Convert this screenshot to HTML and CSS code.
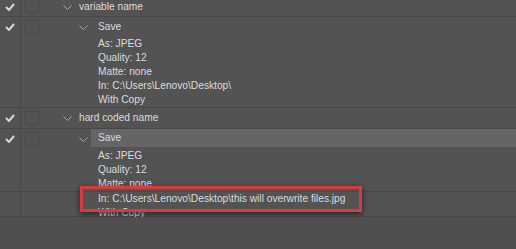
FILE: index.html
```html
<!DOCTYPE html>
<html lang="en">
<head>
    <meta charset="UTF-8">
    <title>Actions</title>
    <link rel="stylesheet" href="styles.css">
</head>
<body>
    <div class="panel">
        <div class="row first">
            <div class="check"><svg width="10" height="8" viewBox="0 0 10 8"><path d="M1 4 L4 7 L9 1" /></svg></div>
            <div class="toggle"><span class="box"></span></div>
            <div class="body">
                <div class="head lvl1"><svg class="chev" width="9" height="5" viewBox="0 0 9 5"><path d="M0.5 0.5 L4.5 4.5 L8.5 0.5" /></svg><span class="label">variable name</span></div>
            </div>
        </div>

        <div class="row">
            <div class="check"><svg width="10" height="8" viewBox="0 0 10 8"><path d="M1 4 L4 7 L9 1" /></svg></div>
            <div class="toggle"><span class="box"></span></div>
            <div class="body">
                <div class="head lvl2"><svg class="chev" width="9" height="5" viewBox="0 0 9 5"><path d="M0.5 0.5 L4.5 4.5 L8.5 0.5" /></svg><span class="label">Save</span></div>
                <div class="line">As: JPEG</div>
                <div class="line">Quality: 12</div>
                <div class="line">Matte: none</div>
                <div class="line">In: C:\Users\Lenovo\Desktop\</div>
                <div class="line">With Copy</div>
            </div>
        </div>

        <div class="row">
            <div class="check"><svg width="10" height="8" viewBox="0 0 10 8"><path d="M1 4 L4 7 L9 1" /></svg></div>
            <div class="toggle"><span class="box"></span></div>
            <div class="body">
                <div class="head lvl1"><svg class="chev" width="9" height="5" viewBox="0 0 9 5"><path d="M0.5 0.5 L4.5 4.5 L8.5 0.5" /></svg><span class="label">hard coded name</span></div>
            </div>
        </div>

        <div class="row">
            <div class="check"><svg width="10" height="8" viewBox="0 0 10 8"><path d="M1 4 L4 7 L9 1" /></svg></div>
            <div class="toggle"><span class="box"></span></div>
            <div class="body">
                <div class="head lvl2 selected"><svg class="chev" width="9" height="5" viewBox="0 0 9 5"><path d="M0.5 0.5 L4.5 4.5 L8.5 0.5" /></svg><span class="label">Save</span></div>
                <div class="line">As: JPEG</div>
                <div class="line">Quality: 12</div>
                <div class="line">Matte: none</div>
            </div>
        </div>

        <div class="row last">
            <div class="check"></div>
            <div class="toggle"></div>
            <div class="body">
                <div class="line marked">In: C:\Users\Lenovo\Desktop\this will overwrite files.jpg</div>
                <div class="line tail">With Copy</div>
            </div>
        </div>
    </div>
</body>
</html>
```

FILE: styles.css
```css
body {
    margin: 0;
    background-color: #4f4f4f;
    font-family: "Liberation Sans", Arial, sans-serif;
    font-size: 10.2px;
    color: #dcdcdc;
    overflow: hidden;
}

.panel {
    margin-top: -4px;
    background-color: #535353;
}

.row {
    display: flex;
    border-bottom: 1px solid #474747;
}

.check {
    width: 21px;
    flex-shrink: 0;
    border-right: 1px solid #474747;
    display: flex;
    justify-content: center;
    align-items: flex-start;
    padding-top: 6px;
    box-sizing: border-box;
}

.check svg path {
    fill: none;
    stroke: #d6d6d6;
    stroke-width: 2;
}

.toggle {
    width: 18px;
    flex-shrink: 0;
    padding: 3px 0 0 4px;
}

.box {
    display: block;
    width: 12px;
    height: 12px;
    border: 1px solid #4a4a4a;
    background-color: #545454;
}

.body {
    flex: 1;
}

.head {
    display: flex;
    align-items: center;
    height: 20px;
    line-height: 20px;
}

.first .head {
    padding-top: 2px;
    height: 18px;
}

.first .check {
    padding-top: 7px;
}

.chev path {
    fill: none;
    stroke: #a9a9a9;
    stroke-width: 1;
}

.lvl1 {
    padding-left: 20px;
}

.lvl2 {
    padding-left: 36px;
}

.lvl2 .label {
    margin-left: 3px;
}

.label {
    flex: 1;
    padding-left: 7px;
}

.selected .label {
    background-color: #656565;
    height: 18px;
    line-height: 18px;
    align-self: flex-start;
}

.line {
    height: 14px;
    line-height: 14px;
    padding-left: 55px;
}

.last .body {
    height: 24px;
}

.tail {
    height: 10px;
}

.marked {
    position: relative;
    z-index: 1;
}

.marked::after {
    content: "";
    position: absolute;
    left: 37px;
    top: -6px;
    width: 276px;
    height: 20px;
    border: 3px solid #d83b3d;
    box-shadow: 0 2px 6px rgba(0, 0, 0, 0.6);
}
```
